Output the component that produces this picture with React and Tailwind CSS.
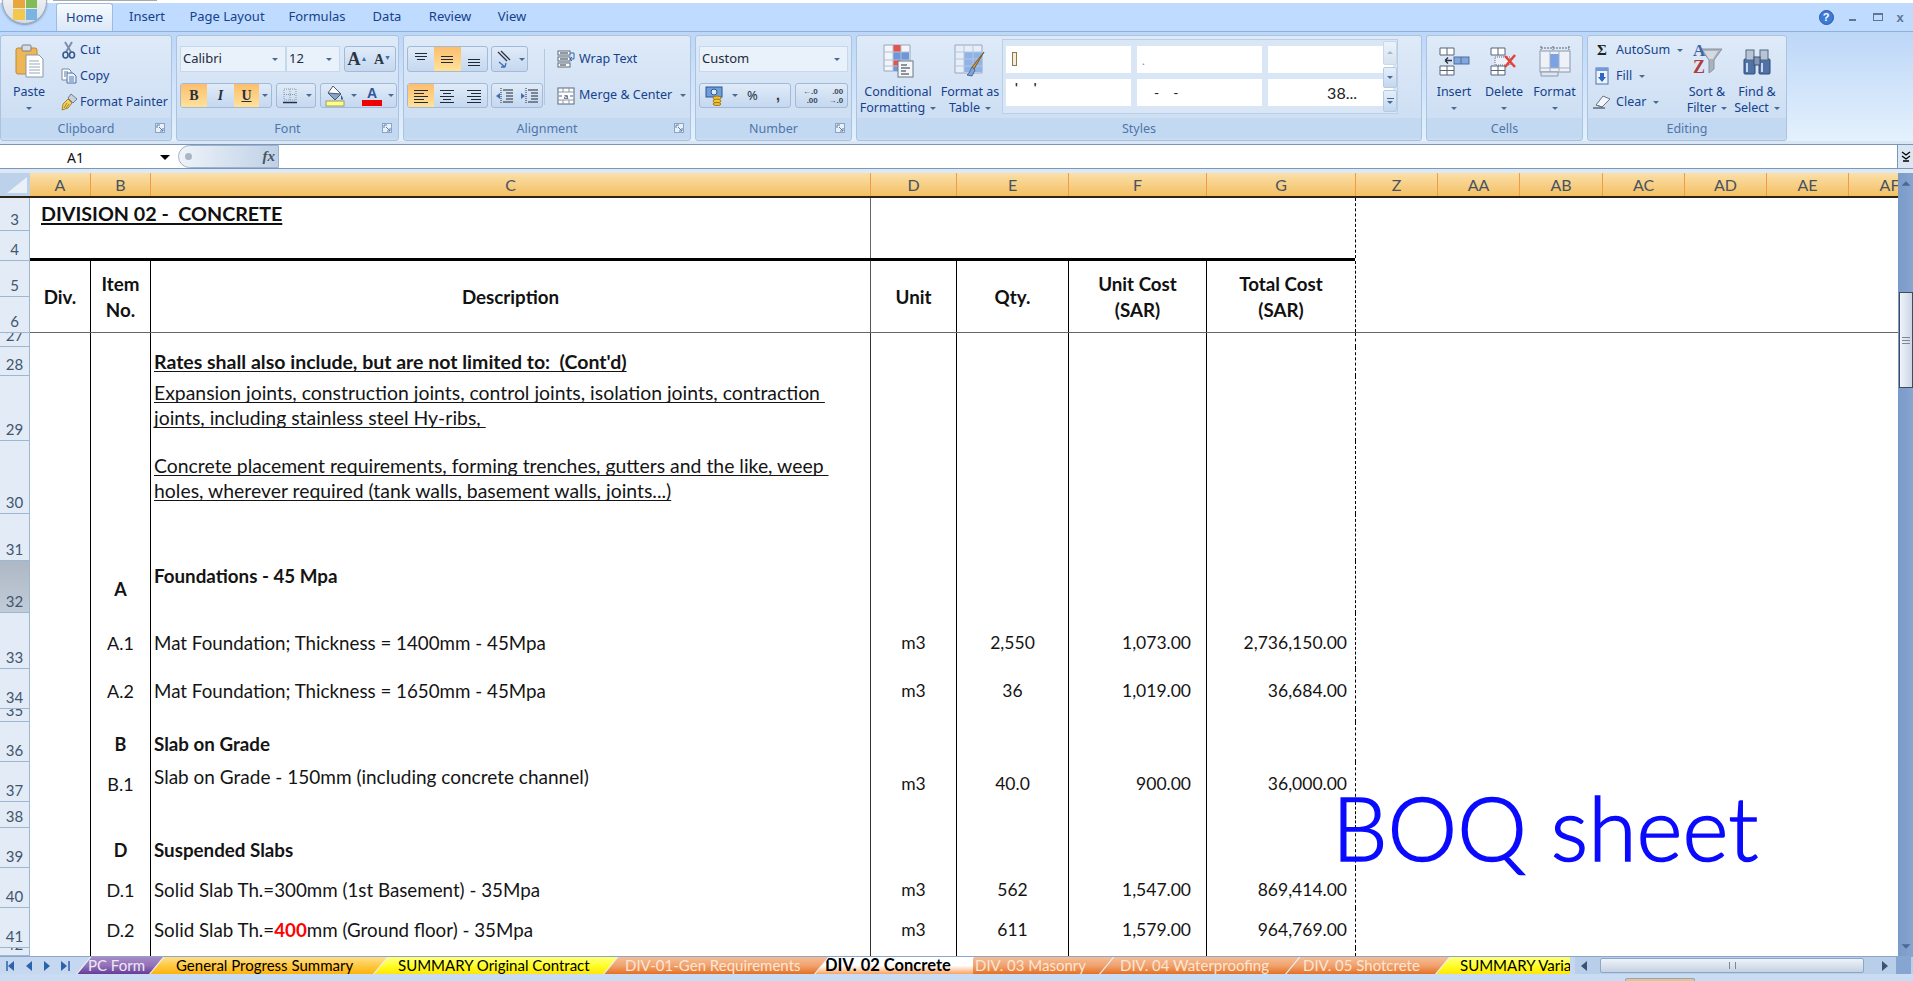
import React from "react";

const uiFont = "font-['Noto_Sans',sans-serif]";
const cellFont = "font-['Lato',sans-serif]";

const Caret = ({ className = "" }) => (
  <span
    className={`inline-block h-0 w-0 border-x-[3px] border-t-[3px] border-x-transparent border-t-[#4a6a96] ${className}`}
  />
);

const Svg = ({ w, h, children, className = "" }) => (
  <svg width={w} height={h} viewBox={`0 0 ${w} ${h}`} className={className}>
    {children}
  </svg>
);

/* ---------- ribbon icons ---------- */
const PasteIcon = () => (
  <Svg w={30} h={34}>
    <rect x="2" y="4" width="21" height="26" rx="2" fill="#eeb655" stroke="#b98a3a" />
    <rect x="8" y="1" width="9" height="6" rx="1" fill="#d9dde2" stroke="#77808c" />
    <path d="M12 11h13l4 4v18H12z" fill="#fff" stroke="#8b97a8" />
    <path d="M15 17h10M15 20h11M15 23h11M15 26h11M15 29h11" stroke="#9aa7ba" />
  </Svg>
);
const CutIcon = () => (
  <Svg w={14} h={18}>
    <path d="M3 1l6 10M10 1L4 11" stroke="#7d8ea8" strokeWidth="2" />
    <ellipse cx="3.5" cy="14" rx="2.5" ry="3" fill="none" stroke="#35588f" strokeWidth="1.6" />
    <ellipse cx="10" cy="14" rx="2.5" ry="3" fill="none" stroke="#35588f" strokeWidth="1.6" />
  </Svg>
);
const CopyIcon = () => (
  <Svg w={16} h={16}>
    <path d="M1 1h7l2 2v9H1z" fill="#fff" stroke="#7a8aa4" />
    <path d="M6 5h6l3 3v7H6z" fill="#eaf1fb" stroke="#4f6f9f" />
    <path d="M3 4h4M3 6h2M3 8h2M8 9h5M8 11h5M8 13h5" stroke="#4f78b5" />
  </Svg>
);
const PainterIcon = () => (
  <Svg w={18} h={18}>
    <path d="M11 1l6 5-4 4-5-5z" fill="#c9d1dc" stroke="#6f7d90" />
    <path d="M8 6l4 4-4 5-6 2 1-6z" fill="#f3cf63" stroke="#a9862c" />
    <path d="M4 15l3-5M6 15l3-4" stroke="#a9862c" />
  </Svg>
);
const BordersIcon = () => (
  <Svg w={16} h={16}>
    <path d="M2 1h12v11H2zM8 1v11M2 6.5h12" fill="none" stroke="#8d99aa" strokeDasharray="1 1" />
    <path d="M1 14.5h14" stroke="#27303f" strokeWidth="1.4" />
  </Svg>
);
const FillIcon = () => (
  <Svg w={22} h={22}>
    <path d="M9 1l8 8-6 6-7-7z" fill="#fff" stroke="#4d5a6c" />
    <path d="M4 8l13 1-6 6z" fill="#86a5cb" stroke="#4d5a6c" />
    <path d="M17 10c1.500 2 2 3 2 4s-2 1-2 0 0-2 0-4z" fill="#3a5f95" />
    <rect x="2" y="16" width="18" height="5" fill="#ffff80" stroke="#9a9a70" />
  </Svg>
);
const AlignIcon = ({ rows }) => (
  <Svg w={18} h={18}>
    {rows.map(([a, b, y]) => (
      <path key={y} d={`M${a} ${y + 0.5}H${b}`} stroke="#1f2937" />
    ))}
  </Svg>
);
const OrientIcon = () => (
  <Svg w={18} h={18}>
    <path d="M2 2l9 9M5 1l9 9" stroke="#2b3544" strokeWidth="1.3" fill="none" />
    <path d="M3 12l6 5M9 17l1-4M9 17l-4 0" stroke="#3c6fb4" strokeWidth="1.3" fill="none" />
  </Svg>
);
const IndentIcon = ({ dir }) => (
  <Svg w={18} h={18}>
    <path d="M7 3h10M10 6h7M10 9h7M10 12h7M7 15h10" stroke="#1f2937" />
    <path d="M5 1v16" stroke="#1f2937" strokeDasharray="1 1" />
    {dir === "left" ? (
      <path d="M0 9l4-3v6z" fill="#3c6fb4" />
    ) : (
      <path d="M4 9L0 6v6z" fill="#3c6fb4" />
    )}
  </Svg>
);
const WrapIcon = () => (
  <Svg w={18} h={18}>
    <rect x="1" y="1" width="12" height="4" fill="#fff" stroke="#5c6877" />
    <rect x="1" y="7" width="12" height="4" fill="#fff" stroke="#5c6877" />
    <rect x="1" y="13" width="12" height="4" fill="#fff" stroke="#5c6877" />
    <path d="M3 3h8M3 9h8M3 15h6" stroke="#27303f" />
    <path d="M13 3h4v6h-3M15 7l-2 2 2 2" stroke="#2f64b0" fill="none" />
  </Svg>
);
const MergeIcon = () => (
  <Svg w={18} h={18}>
    <rect x="1" y="1" width="16" height="16" fill="#fff" stroke="#5c6877" />
    <path d="M1 5h16M1 13h16M6 1v4M12 1v4M6 13v4M12 13v4" stroke="#8a96a6" />
    <text x="9" y="12" textAnchor="middle" fontSize="8" fill="#27303f" fontFamily="Liberation Sans">a</text>
    <path d="M2 9h3M16 9h-3" stroke="#2f64b0" />
  </Svg>
);
const MoneyIcon = () => (
  <Svg w={20} h={20}>
    <rect x="1" y="1" width="16" height="10" fill="#6f9fd8" stroke="#2b5797" />
    <circle cx="9" cy="6" r="3" fill="#dce9f8" stroke="#2b5797" />
    <ellipse cx="12" cy="12" rx="4" ry="2" fill="#f2c23c" stroke="#a27c14" />
    <ellipse cx="12" cy="15" rx="4" ry="2" fill="#f2c23c" stroke="#a27c14" />
    <ellipse cx="12" cy="18" rx="4" ry="1.500" fill="#f2c23c" stroke="#a27c14" />
  </Svg>
);
const DecIcon = ({ top, bottom }) => (
  <span className="relative flex h-[18px] w-[18px] flex-col items-end justify-center font-['Liberation_Sans',sans-serif] text-[8px] font-bold leading-[9px] text-[#39485c]">
    <span>{top}</span>
    <span>{bottom}</span>
  </span>
);
const CondIcon = () => (
  <Svg w={32} h={34}>
    <path d="M2 1h26v26H2z" fill="#f2f5fa" stroke="#9aa7ba" />
    <rect x="11" y="1" width="8" height="7" fill="#e5544b" />
    <rect x="11" y="8" width="16" height="8" fill="#6e96dc" />
    <rect x="11" y="16" width="8" height="6" fill="#e5544b" />
    <rect x="11" y="22" width="8" height="5" fill="#6e96dc" />
    <path d="M2 8h26M2 16h26M2 22h26M11 1v26M19 1v26" stroke="#b6c0cf" fill="none" />
    <rect x="16" y="17" width="15" height="16" fill="#f4f6f9" stroke="#6c7888" />
    <path d="M19 21h6M19 24h9M19 27h5M19 30h8" stroke="#27303f" />
  </Svg>
);
const TableIcon = () => (
  <Svg w={32} h={34}>
    <path d="M1 1h27v28H1z" fill="#e6eefa" stroke="#9aa7ba" />
    <rect x="10" y="8" width="18" height="20" fill="#8fb3e6" />
    <path d="M1 8h27M1 15h27M1 22h27M10 1v28M19 1v28" stroke="#b7c6dc" />
    <path d="M30 8L20 25l-2-2z" fill="#c99543" stroke="#7b5a24" />
    <path d="M18 23l3 3-3 6-5-1c3-2 3-5 5-8z" fill="#7da4d8" stroke="#4a6a96" />
  </Svg>
);
const InsertIcon = () => (
  <Svg w={32} h={30}>
    <path d="M2 2h14v7H2zM2 20h14v9H2zM9 2v7M9 20v9M2 24.500h14" fill="#fff" stroke="#56657a" />
    <rect x="16" y="11" width="15" height="7" fill="#82a6de" stroke="#4d6e9f" />
    <path d="M23 11v7" stroke="#4d6e9f" />
    <path d="M14 14.500H7M7 14.500l3-3M7 14.500l3 3" stroke="#27303f" fill="none" strokeWidth="1.300" />
  </Svg>
);
const DeleteIcon = () => (
  <Svg w={30} h={30}>
    <path d="M2 2h14v7H2zM2 20h14v9H2zM9 2v7M9 20v9M2 24.500h14" fill="#fff" stroke="#56657a" />
    <path d="M6 11h15v8H6z" fill="#eef2f8" stroke="#5e7290" strokeDasharray="1 1" />
    <path d="M16 10l10 11M26 9L16 21" stroke="#e34234" strokeWidth="2.500" />
  </Svg>
);
const FormatIcon = () => (
  <Svg w={32} h={32}>
    <path d="M2 3h28M2 1v4M30 1v4M14 1v4" stroke="#56657a" strokeDasharray="2 1" fill="none" />
    <rect x="1" y="6" width="30" height="21" fill="#eef2f8" stroke="#8a97aa" />
    <rect x="11" y="9" width="9" height="14" fill="#7ba3e4" />
    <path d="M11 6v21M20 6v21M1 23h30" stroke="#a3afc0" />
    <path d="M2 27h17v4H2z" fill="#dfe6f1" stroke="#8a97aa" />
  </Svg>
);
const FillSmallIcon = () => (
  <Svg w={14} h={18}>
    <rect x="1" y="1" width="12" height="16" fill="#eef3fb" stroke="#4a72b3" />
    <rect x="1" y="1" width="12" height="3" fill="#6e9ade" />
    <path d="M5 6h4v4h2l-4 5-4-5h2z" fill="#2d68c4" />
  </Svg>
);
const ClearIcon = () => (
  <Svg w={18} h={14}>
    <path d="M10 1l7 3-8 8-6-2z" fill="#f3f5f8" stroke="#697587" />
    <path d="M3 10l6 2" stroke="#697587" />
    <path d="M0 13h12" stroke="#27303f" />
  </Svg>
);
const SortIcon = () => (
  <span className="relative flex h-[32px] w-[32px]">
    <Svg w={32} h={32} className="absolute left-0 top-0">
      <path d="M10 4h21l-8 11v9l-5 4V15z" fill="#aab2bd" stroke="#8b93a0" />
      <path d="M13 6h14l-5 8h-4z" fill="#d5dae1" />
    </Svg>
    <span className="absolute left-[2px] top-[-3px] font-['Liberation_Serif',serif] text-[17px] font-bold leading-[18px] text-[#3f66a8]">A</span>
    <span className="absolute left-[2px] top-[13px] font-['Liberation_Serif',serif] text-[18px] font-bold leading-[18px] text-[#b13c3c]">Z</span>
  </span>
);
const FindIcon = () => (
  <Svg w={30} h={30}>
    <rect x="2" y="13" width="11" height="15" rx="1" fill="#4f73a8" stroke="#2f4a74" />
    <rect x="17" y="13" width="11" height="15" rx="1" fill="#4f73a8" stroke="#2f4a74" />
    <rect x="4" y="4" width="8" height="10" fill="#b7c4d6" stroke="#55677f" />
    <rect x="18" y="4" width="8" height="10" fill="#b7c4d6" stroke="#55677f" />
    <rect x="12" y="11" width="6" height="8" fill="#8598b3" stroke="#3d5272" />
    <path d="M5 17v9M20 17v9" stroke="#c8d7ec" strokeWidth="2" />
  </Svg>
);
const HelpIcon = () => (
  <span className="flex h-[15px] w-[15px] items-center justify-center rounded-full border border-[#2a5aa8] bg-[#3d7ad6] font-['Liberation_Sans',sans-serif] text-[11px] font-bold leading-none text-white">
    ?
  </span>
);
const OfficeButton = () => (
  <div className="absolute left-[2px] top-[-21px] z-20 flex h-[45px] w-[45px] items-center justify-center rounded-full border border-[#9aa6b5] bg-gradient-to-b from-[#ffffff] to-[#d6dde6] shadow-[0_1px_2px_rgba(60,80,110,0.5)]">
    <Svg w={26} h={26} className="mt-[12px]">
      <rect x="1" y="1" width="12" height="12" fill="#e9a63c" />
      <rect x="14" y="1" width="11" height="12" fill="#82bb58" />
      <rect x="1" y="14" width="12" height="11" fill="#f2c94e" />
      <rect x="14" y="14" width="11" height="11" fill="#79b4e2" />
    </Svg>
  </div>
);

/* ---------- ribbon pieces ---------- */
const Launcher = () => (
  <Svg w={10} h={10} className="absolute right-[6px] top-[5px]">
    <rect x="0.5" y="0.5" width="9" height="9" fill="#e8f0fa" stroke="#8aa3c6" />
    <path d="M2 2h3M2 2v3M8 8L4 4M8 8V5M8 8H5" stroke="#5f7ea8" fill="none" />
  </Svg>
);

const Group = ({ w, label, launcher, children }) => (
  <div className={`${w} flex shrink-0 flex-col overflow-hidden rounded-[3px] border border-[#abc3df] bg-gradient-to-b from-[#deeaf8] to-[#cadcf2]`}>
    <div className="flex h-[82px]">{children}</div>
    <div className="relative flex h-[20px] items-center justify-center bg-[#c3d9f2] pt-[2px] text-[12.5px] leading-none text-[#4f75aa]">
      {label}
      {launcher && <Launcher />}
    </div>
  </div>
);

const BtnGroup = ({ w, children, className = "" }) => (
  <div className={`${w} flex h-full shrink-0 overflow-hidden rounded-[3px] border border-[#a2bad8] bg-gradient-to-b from-[#e0ebf8] to-[#c5d8ef] ${className}`}>
    {children}
  </div>
);

const Btn = ({ w, active, children }) => (
  <div
    className={`${w} flex h-full items-center justify-center ${
      active ? "bg-gradient-to-b from-[#fbbe6c] to-[#fee29a]" : ""
    }`}
  >
    {children}
  </div>
);

const Combo = ({ w, value, className = "" }) => (
  <div className={`${w} flex h-full shrink-0 items-center justify-between border border-[#c6d8ec] bg-[#e9f1fb] pl-[2px] pr-[7px] text-[13px] text-[#1e2b3c] ${className}`}>
    <span>{value}</span>
    <Caret />
  </div>
);

const SmallRow = ({ iconW, icon, label, caret }) => (
  <div className="flex h-[26px] items-center text-[12.5px] text-[#15428b]">
    <span className={`${iconW} flex shrink-0 items-center justify-center`}>{icon}</span>
    <span>{label}</span>
    {caret && <Caret className="ml-[7px]" />}
  </div>
);

const BigBtn = ({ w, icon, line1, line2 }) => (
  <div className={`${w} flex shrink-0 flex-col items-center text-[12.5px] leading-[16px] text-[#15428b]`}>
    <div className="flex h-[48px] items-center justify-center pt-[2px]">{icon}</div>
    <span>{line1}</span>
    <span className="flex h-[16px] items-center gap-[5px] whitespace-nowrap">
      {line2}
      <Caret />
    </span>
  </div>
);

const Ribbon = () => (
  <div className={`flex h-[109px] gap-[4px] bg-gradient-to-b from-[#bdd7f8] to-[#e4f1fd] pt-[3px] ${uiFont}`}>
    <Group w="w-[172px]" label="Clipboard" launcher>
      <BigBtn w="w-[56px]" icon={<PasteIcon />} line1="Paste" line2="" />
      <div className="flex flex-col pt-[1px]">
        <SmallRow iconW="w-[23px]" icon={<CutIcon />} label="Cut" />
        <SmallRow iconW="w-[23px]" icon={<CopyIcon />} label="Copy" />
        <SmallRow iconW="w-[23px]" icon={<PainterIcon />} label="Format Painter" />
      </div>
    </Group>

    <Group w="w-[223px]" label="Font" launcher>
      <div className="flex flex-col gap-[11px] px-[3px] pt-[10px]">
        <div className="flex h-[26px]">
          <Combo w="w-[106px]" value="Calibri" />
          <Combo w="w-[54px]" value="12" />
          <BtnGroup w="w-[52px]" className="ml-[4px]">
            <Btn w="w-1/2">
              <span className="font-['Liberation_Serif',serif] text-[18px] font-bold text-[#2b3544]">
                A<sup className="text-[7px] text-[#3c6fb4]">▲</sup>
              </span>
            </Btn>
            <Btn w="w-1/2">
              <span className="font-['Liberation_Serif',serif] text-[14px] font-bold text-[#2b3544]">
                A<sup className="text-[7px] text-[#3c6fb4]">▼</sup>
              </span>
            </Btn>
          </BtnGroup>
        </div>
        <div className="flex h-[25px] gap-[4px]">
          <BtnGroup w="w-[92px]">
            <Btn w="w-[26px]" active>
              <span className="font-['Liberation_Serif',serif] text-[14px] font-bold text-[#27303f]">B</span>
            </Btn>
            <Btn w="w-[27px]">
              <span className="font-['Liberation_Serif',serif] text-[14px] font-bold italic text-[#27303f]">I</span>
            </Btn>
            <Btn w="w-[25px]" active>
              <span className="font-['Liberation_Serif',serif] text-[14px] font-bold text-[#27303f] underline">U</span>
            </Btn>
            <Btn w="w-[12px]"><Caret /></Btn>
          </BtnGroup>
          <BtnGroup w="w-[40px]">
            <Btn w="w-[26px]"><BordersIcon /></Btn>
            <Btn w="w-[12px]"><Caret /></Btn>
          </BtnGroup>
          <BtnGroup w="w-[77px]">
            <Btn w="w-[28px]"><FillIcon /></Btn>
            <Btn w="w-[9px]"><Caret /></Btn>
            <Btn w="w-[28px]">
              <span className="flex flex-col items-center font-['Liberation_Sans',sans-serif] text-[14px] font-bold leading-[14px] text-[#2f5597]">
                A<span className="h-[6px] w-[20px] bg-[#f00000]" />
              </span>
            </Btn>
            <Btn w="w-[10px]"><Caret /></Btn>
          </BtnGroup>
        </div>
      </div>
    </Group>

    <Group w="w-[288px]" label="Alignment" launcher>
      <div className="flex w-[137px] shrink-0 flex-col gap-[11px] pl-[3px] pt-[10px]">
        <div className="flex h-[26px] gap-[3px]">
          <BtnGroup w="w-[81px]">
            <Btn w="w-1/3"><AlignIcon rows={[[3, 15, 3], [3, 15, 6], [5, 13, 9]]} /></Btn>
            <Btn w="w-1/3" active><AlignIcon rows={[[3, 15, 6], [3, 15, 9], [3, 15, 12]]} /></Btn>
            <Btn w="w-1/3"><AlignIcon rows={[[3, 15, 9], [3, 15, 12], [3, 15, 15]]} /></Btn>
          </BtnGroup>
          <BtnGroup w="w-[37px]">
            <Btn w="w-[25px]"><OrientIcon /></Btn>
            <Btn w="w-[10px]"><Caret /></Btn>
          </BtnGroup>
        </div>
        <div className="flex h-[25px] gap-[3px]">
          <BtnGroup w="w-[81px]">
            <Btn w="w-1/3" active><AlignIcon rows={[[2, 16, 3], [2, 12, 6], [2, 16, 9], [2, 12, 12], [2, 16, 15]]} /></Btn>
            <Btn w="w-1/3"><AlignIcon rows={[[2, 16, 3], [5, 13, 6], [2, 16, 9], [5, 13, 12], [2, 16, 15]]} /></Btn>
            <Btn w="w-1/3"><AlignIcon rows={[[2, 16, 3], [6, 16, 6], [2, 16, 9], [6, 16, 12], [2, 16, 15]]} /></Btn>
          </BtnGroup>
          <BtnGroup w="w-[52px]">
            <Btn w="w-1/2"><IndentIcon dir="left" /></Btn>
            <Btn w="w-1/2"><IndentIcon dir="right" /></Btn>
          </BtnGroup>
        </div>
      </div>
      <div className="ml-[3px] mt-[13px] h-[56px] w-px bg-[#b3c8e2]" />
      <div className="ml-[12px] flex flex-col gap-[11px] pt-[10px] text-[12.5px] text-[#15428b]">
        <div className="flex h-[26px] items-center gap-[4px]"><WrapIcon /> Wrap Text</div>
        <div className="flex h-[25px] items-center gap-[4px] whitespace-nowrap"><MergeIcon /> Merge &amp; Center <Caret className="ml-[4px]" /></div>
      </div>
    </Group>

    <Group w="w-[157px]" label="Number" launcher>
      <div className="flex flex-col gap-[11px] px-[3px] pt-[10px]">
        <div className="flex h-[26px]"><Combo w="w-[149px]" value="Custom" /></div>
        <div className="flex h-[25px] gap-[4px]">
          <BtnGroup w="w-[92px]">
            <Btn w="w-[30px]"><MoneyIcon /></Btn>
            <Btn w="w-[9px]"><Caret /></Btn>
            <Btn w="w-[27px]"><span className="text-[13px] text-[#27303f]">%</span></Btn>
            <Btn w="w-[24px]"><span className="font-['Liberation_Sans',sans-serif] text-[14px] font-bold text-[#27303f]">,</span></Btn>
          </BtnGroup>
          <BtnGroup w="w-[53px]">
            <Btn w="w-1/2"><DecIcon top="←.0" bottom=".00" /></Btn>
            <Btn w="w-1/2"><DecIcon top=".00" bottom="→.0" /></Btn>
          </BtnGroup>
        </div>
      </div>
    </Group>

    <Group w="w-[566px]" label="Styles">
      <BigBtn w="w-[82px]" icon={<CondIcon />} line1="Conditional" line2="Formatting" />
      <BigBtn w="w-[62px]" icon={<TableIcon />} line1="Format as" line2="Table" />
      <div className="ml-[1px] mt-[3px] flex h-[75px] w-[396px] shrink-0 border border-[#b9cee7] bg-[#d8e6f6]">
        <div className="grid w-[380px] shrink-0 grid-cols-[125px_125px_125px] grid-rows-[27px_27px] gap-x-[6px] gap-y-[6px] pl-[3px] pt-[6px] font-['Lato',sans-serif] text-[#222]">
          <div className="bg-white pl-[6px] pt-[6px]"><span className="block h-[14px] w-[5px] border border-[#8c7a4c] bg-[#f4eed8]" /></div>
          <div className="bg-white pl-[5px] pt-[6px] text-[12px] text-[#889]">.</div>
          <div className="bg-white" />
          <div className="bg-white pl-[9px] text-[13px] font-bold tracking-[16px]">''</div>
          <div className="bg-white pl-[17px] pt-[3px] text-[14px] tracking-[14px]">--</div>
          <div className="bg-white pr-[36px] pt-[2px] text-right text-[16px]">38...</div>
        </div>
        <div className="flex w-[15px] flex-col gap-[2px] py-[1px]">
          <div className="flex h-[24px] items-center justify-center rounded-[2px] border border-[#c9d8ea] bg-gradient-to-b from-[#ecf2f9] to-[#d7e3f1]"><Caret className="rotate-180 opacity-40" /></div>
          <div className="flex h-[22px] items-center justify-center rounded-[2px] border border-[#b5cae3] bg-gradient-to-b from-[#e6effa] to-[#c3d7ef]"><Caret /></div>
          <div className="flex h-[22px] flex-col items-center justify-center gap-[2px] rounded-[2px] border border-[#b5cae3] bg-gradient-to-b from-[#e6effa] to-[#c3d7ef]"><span className="h-px w-[7px] bg-[#4a6a96]" /><Caret /></div>
        </div>
      </div>
    </Group>

    <Group w="w-[157px]" label="Cells">
      <BigBtn w="w-[54px]" icon={<InsertIcon />} line1="Insert" line2="" />
      <BigBtn w="w-[46px]" icon={<DeleteIcon />} line1="Delete" line2="" />
      <BigBtn w="w-[55px]" icon={<FormatIcon />} line1="Format" line2="" />
    </Group>

    <Group w="w-[200px]" label="Editing">
      <div className="flex w-[91px] shrink-0 flex-col pt-[1px]">
        <SmallRow iconW="w-[28px]" icon={<span className="font-['Liberation_Serif',serif] text-[15px] font-bold text-[#222]">Σ</span>} label="AutoSum" caret />
        <SmallRow iconW="w-[28px]" icon={<FillSmallIcon />} label="Fill" caret />
        <SmallRow iconW="w-[28px]" icon={<ClearIcon />} label="Clear" caret />
      </div>
      <BigBtn w="w-[56px]" icon={<SortIcon />} line1="Sort &" line2="Filter" />
      <BigBtn w="w-[44px]" icon={<FindIcon />} line1="Find &" line2="Select" />
    </Group>
  </div>
);

/* ---------- sheet ---------- */
const columns = [
  { id: "A", w: "w-[61px]" },
  { id: "B", w: "w-[60px]" },
  { id: "C", w: "w-[720px]" },
  { id: "D", w: "w-[86px]" },
  { id: "E", w: "w-[112px]" },
  { id: "F", w: "w-[138px]" },
  { id: "G", w: "w-[149px]" },
  { id: "Z", w: "w-[82px]" },
  { id: "AA", w: "w-[82px]" },
  { id: "AB", w: "w-[83px]" },
  { id: "AC", w: "w-[82px]" },
  { id: "AD", w: "w-[82px]" },
  { id: "AE", w: "w-[82px]" },
  { id: "AF", w: "w-[82px]" },
];

const rowNumbers = [
  { n: 3, h: "h-[33px]" },
  { n: 4, h: "h-[30px]" },
  { n: 5, h: "h-[36px]" },
  { n: 6, h: "h-[36px]" },
  { n: 27, h: "h-[14px]" },
  { n: 28, h: "h-[29px]" },
  { n: 29, h: "h-[65px]" },
  { n: 30, h: "h-[73px]" },
  { n: 31, h: "h-[47px]" },
  { n: 32, h: "h-[52px]", selected: true },
  { n: 33, h: "h-[56px]" },
  { n: 34, h: "h-[40px]" },
  { n: 35, h: "h-[13px]" },
  { n: 36, h: "h-[40px]" },
  { n: 37, h: "h-[40px]" },
  { n: 38, h: "h-[26px]" },
  { n: 39, h: "h-[40px]" },
  { n: 40, h: "h-[40px]" },
  { n: 41, h: "h-[40px]" },
  { n: 42, h: "h-[8px]" },
];

const Row = ({ h, item, itemBold, desc, unit, qty, rate, total }) => (
  <div className={`flex ${h} text-[17.5px] text-[#141414]`}>
    <div className="w-[61px] border-r border-black" />
    <div className={`flex w-[60px] items-center justify-center border-r border-black pt-[4px] text-[18px] ${itemBold ? "font-bold" : ""}`}>{item}</div>
    <div className="flex w-[720px] items-center border-r border-[#333] pl-[3px] pt-[4px] text-[18.75px]">{desc}</div>
    <div className="flex w-[86px] items-center justify-center border-r border-black pt-[4px]">{unit}</div>
    <div className="flex w-[112px] items-center justify-center border-r border-black pt-[4px]">{qty}</div>
    <div className="flex w-[138px] items-center justify-end border-r border-black pr-[15px] pt-[4px]">{rate}</div>
    <div className="flex w-[149px] items-center justify-end border-r border-dashed border-black pr-[8px] pt-[4px]">{total}</div>
  </div>
);

const underlined = "underline underline-offset-2 [text-decoration-skip-ink:none]";

const Sheet = () => (
  <div className={`flex h-[758px] ${cellFont}`}>
    <div className="flex w-[30px] shrink-0 flex-col">
      {rowNumbers.map((r) => (
        <div
          key={r.n}
          className={`${r.h} flex shrink-0 items-end justify-center overflow-hidden border-b border-r border-[#9db6d2] text-[15px] leading-[21px] text-[#41566f] ${
            r.selected ? "bg-gradient-to-b from-[#aeb8c5] to-[#c2ccd9]" : "bg-[#e3ebf6]"
          }`}
        >
          {r.n}
        </div>
      ))}
    </div>

    <div className="relative flex-1 bg-white">
      {/* rows 3-4 */}
      <div className="flex h-[60px] text-[#111]">
        <div className="w-[841px] border-r border-[#666] pl-[11px] pt-[1px]">
          <span className={`whitespace-pre text-[19.7px] font-bold decoration-2 ${underlined}`}>DIVISION 02 -  CONCRETE</span>
        </div>
        <div className="w-[485px] border-r border-dashed border-black" />
      </div>
      <div className="h-[3px] w-[1325px] bg-black" />

      {/* rows 5-6 */}
      <div className="flex h-[72px] border-b border-[#666] text-center text-[18.75px] font-bold leading-[26px] text-[#111]">
        <div className="flex w-[61px] items-center justify-center border-r border-black">Div.</div>
        <div className="flex w-[60px] items-center justify-center border-r border-black">Item<br />No.</div>
        <div className="flex w-[720px] items-center justify-center border-r border-[#555]">Description</div>
        <div className="flex w-[86px] items-center justify-center border-r border-black">Unit</div>
        <div className="flex w-[112px] items-center justify-center border-r border-black">Qty.</div>
        <div className="flex w-[138px] items-center justify-center border-r border-black">Unit Cost<br />(SAR)</div>
        <div className="flex w-[149px] items-center justify-center border-r border-dashed border-black">Total Cost<br />(SAR)</div>
      </div>

      <Row h="h-[14px]" />
      <Row h="h-[29px]" desc={<span className={`-mt-[4px] whitespace-pre text-[19.5px] font-bold ${underlined}`}>Rates shall also include, but are not limited to:  (Cont'd)</span>} />
      <Row
        h="h-[65px]"
        desc={
          <span className={`-mt-[12px] whitespace-pre text-[19.4px] leading-[25px] ${underlined}`}>
            {"Expansion joints, construction joints, control joints, isolation joints, contraction \njoints, including stainless steel Hy-ribs, "}
          </span>
        }
      />
      <Row
        h="h-[73px]"
        desc={
          <span className={`-mt-[4px] whitespace-pre text-[19.4px] leading-[25px] ${underlined}`}>
            {"Concrete placement requirements, forming trenches, gutters and the like, weep \nholes, wherever required (tank walls, basement walls, joints...)"}
          </span>
        }
      />
      <Row h="h-[47px]" />
      <Row h="h-[52px]" item="A" itemBold desc={<span className="-mt-[25px] font-bold">Foundations - 45 Mpa</span>} />
      <Row h="h-[56px]" item="A.1" desc="Mat Foundation; Thickness = 1400mm - 45Mpa" unit="m3" qty="2,550" rate="1,073.00" total="2,736,150.00" />
      <Row h="h-[40px]" item="A.2" desc="Mat Foundation; Thickness = 1650mm - 45Mpa" unit="m3" qty="36" rate="1,019.00" total="36,684.00" />
      <Row h="h-[13px]" />
      <Row h="h-[40px]" item="B" itemBold desc={<span className="font-bold">Slab on Grade</span>} />
      <Row h="h-[40px]" item="B.1" desc={<span className="-mt-[13px] text-[19px]">Slab on Grade - 150mm (including concrete channel)</span>} unit="m3" qty="40.0" rate="900.00" total="36,000.00" />
      <Row h="h-[26px]" />
      <Row h="h-[40px]" item="D" itemBold desc={<span className="font-bold">Suspended Slabs</span>} />
      <Row h="h-[40px]" item="D.1" desc="Solid Slab Th.=300mm (1st Basement) - 35Mpa" unit="m3" qty="562" rate="1,547.00" total="869,414.00" />
      <Row
        h="h-[40px]"
        item="D.2"
        desc={<span>Solid Slab Th.=<b className="text-[#ff0000]">400</b>mm (Ground floor) - 35Mpa</span>}
        unit="m3"
        qty="611"
        rate="1,579.00"
        total="964,769.00"
      />
      <Row h="h-[8px]" />

      <span className="absolute left-[1302px] top-[585px] whitespace-nowrap text-[88px] font-light leading-none text-[#0a0aff] [-webkit-text-stroke:1.5px_#0a0aff]">
        BOQ sheet
      </span>
    </div>
  </div>
);

const ScrollBar = () => (
  <div className="flex w-[15px] shrink-0 flex-col items-center bg-gradient-to-r from-[#7a9ac8] to-[#86a5d0]">
    <Caret className="mt-[9px] rotate-180 scale-150 border-t-[#3d5272]" />
    <div className="ml-[1px] mt-[107px] flex h-[96px] w-[14px] items-center justify-center border border-[#3f4c5e] bg-gradient-to-r from-[#f0f3f8] to-[#cbd6e4]">
      <span className="h-[7px] w-[8px] border-y border-[#7b8797] bg-[linear-gradient(#7b8797,#7b8797)] bg-[length:100%_1px] bg-center bg-no-repeat" />
    </div>
    <Caret className="mt-auto mb-[8px] scale-150 border-t-[#3d5272]" />
  </div>
);

/* ---------- sheet tabs ---------- */
const orange = "from-[#f6bd95] via-[#f0a26e] to-[#e4701a]";
const yellow = "from-[#ffff7a] via-[#ffff24] to-[#ffe600]";

const tabs = [
  { label: "PC Form", w: "w-[87px]", fill: "from-[#a78ac6] via-[#9272b8] to-[#663c96]", text: "text-[#efe8f6]", pl: "pl-[12px]" },
  { label: "General Progress Summary", w: "w-[238px]", fill: "from-[#ffdf8a] via-[#ffc93f] to-[#ffb300]", text: "text-black", pl: "pl-[27px]" },
  { label: "SUMMARY Original Contract", w: "w-[244px]", fill: yellow, text: "text-black", pl: "pl-[25px]" },
  { label: "DIV-01-Gen Requirements", w: "w-[225px]", fill: orange, text: "text-[#fce6d4]", pl: "pl-[22px]" },
  { label: "DIV. 02 Concrete", w: "w-[159px]", fill: "from-[#ffffff] via-[#ffffff] to-[#f7a25c]", text: "text-[16.5px] font-bold text-black", pl: "pl-[11px]" },
  { label: "DIV. 03 Masonry", w: "w-[154px]", fill: orange, text: "text-[#fce6d4]", pl: "pl-[16px]" },
  { label: "DIV. 04 Waterproofing", w: "w-[200px]", fill: orange, text: "text-[#fce6d4]", pl: "pl-[21px]" },
  { label: "DIV. 05 Shotcrete", w: "w-[164px]", fill: orange, text: "text-[#fce6d4]", pl: "pl-[18px]" },
  { label: "SUMMARY Variations", w: "w-[180px]", fill: yellow, text: "text-black", pl: "pl-[25px]" },
];

const NavArrows = () => (
  <div className="flex w-[76px] shrink-0 items-center pl-[4px] text-[#2d62ad]">
    <Svg w={72} h={12}>
      <path d="M3 1v10" stroke="#2d62ad" strokeWidth="1.500" />
      <path d="M10 1v10L4 6z" fill="#2d62ad" />
      <path d="M28 1v10l-6-5z" fill="#2d62ad" />
      <path d="M40 1v10l6-5z" fill="#2d62ad" />
      <path d="M57 1v10l6-5z" fill="#2d62ad" />
      <path d="M65 1v10" stroke="#2d62ad" strokeWidth="1.500" />
    </Svg>
  </div>
);

const SheetTabs = () => (
  <div className="flex h-[18px] border-t border-[#8aa6cb] bg-[#c5d8ef]">
    <NavArrows />
    <div className="flex w-[1494px] shrink-0 overflow-hidden font-['Lato',sans-serif] text-[15px] leading-[17px]">
      {tabs.map((t, i) => (
        <div
          key={t.label}
          className={`${t.w} relative h-full shrink-0 bg-[#eaf0f8] [clip-path:polygon(14px_0,100%_0,100%_100%,0_100%)] ${i > 0 ? "-ml-[14px]" : ""}`}
          style={{ zIndex: i === 4 ? 20 : 10 + i }}
        >
          <div className={`flex h-full w-full whitespace-nowrap bg-gradient-to-b [clip-path:polygon(15.5px_0,100%_0,100%_100%,1.5px_100%)] ${t.pl} ${t.fill} ${t.text}`}>
            {t.label}
          </div>
        </div>
      ))}
    </div>
    <div className="ml-[5px] flex flex-1 items-center bg-[#b9cfe9] px-[2px]">
      <Svg w={14} h={12}><path d="M10 1v10L4 6z" fill="#3d5272" /></Svg>
      <div className="ml-[9px] flex h-[15px] w-[264px] items-center justify-center rounded-[2px] border border-[#8ea6c6] bg-gradient-to-b from-[#eef2f8] to-[#c5d2e3]">
        <span className="h-[7px] w-[7px] border-x border-[#7b8797]" />
      </div>
      <Svg w={14} h={12} className="ml-[14px]"><path d="M4 1v10l6-5z" fill="#3d5272" /></Svg>
      <div className="ml-auto h-full w-[15px] bg-[#86a5d0]" />
    </div>
  </div>
);

const ribbonTabs = [
  { label: "Insert", w: "w-[68px]" },
  { label: "Page Layout", w: "w-[92px]" },
  { label: "Formulas", w: "w-[88px]" },
  { label: "Data", w: "w-[52px]" },
  { label: "Review", w: "w-[74px]" },
  { label: "View", w: "w-[50px]" },
];

export default function App() {
  return (
    <div className="relative h-[981px] w-[1913px] overflow-hidden bg-white">
      <div className="relative h-[3px] bg-white">
        <div className="ml-[53px] h-px w-[104px] bg-[#a8a8a8]" />
      </div>
      <OfficeButton />

      {/* tab row */}
      <div className={`flex h-[29px] border-b border-[#8fb0d8] bg-[#bfdbff] pl-[56px] text-[13px] text-[#15428b] ${uiFont}`}>
        <div className="z-10 flex h-[28px] w-[57px] items-center justify-center self-end rounded-t-[3px] border border-b-0 border-[#9dbbe0] bg-gradient-to-b from-[#f6fafe] to-[#dbe8f8]">Home</div>
        {ribbonTabs.map((t) => (
          <div key={t.label} className={`${t.w} flex items-center justify-center`}>{t.label}</div>
        ))}
        <div className="ml-auto flex items-center text-[#5f7590]">
          <span className="flex w-[26px] justify-center"><HelpIcon /></span>
          <span className="flex w-[26px] justify-center"><span className="mt-[6px] h-[2px] w-[7px] bg-[#5f7590]" /></span>
          <span className="flex w-[25px] justify-center"><span className="h-[8px] w-[10px] border border-t-2 border-[#5f7590]" /></span>
          <span className="flex w-[20px] justify-center font-['Liberation_Sans',sans-serif] text-[13px] font-bold leading-none">x</span>
          <span className="w-[3px]" />
        </div>
      </div>

      <Ribbon />

      {/* formula bar */}
      <div className="h-[3px] bg-[#d8e6f6]" />
      <div className={`flex h-[25px] border-y border-[#7a97b8] bg-white ${uiFont}`}>
        <div className="relative flex w-[178px] items-center justify-between pl-[67px] pr-[8px] pt-[1px] text-[14px] text-[#111]">
          A1
          <span className="h-0 w-0 border-x-[5px] border-t-[5px] border-x-transparent border-t-black" />
        </div>
        <div className="flex w-[101px] items-center justify-between rounded-l-full border border-[#9fb3cc] bg-gradient-to-r from-[#eef3f9] to-[#bfd1e7] pl-[6px] pr-[3px]">
          <span className="h-[7px] w-[7px] rounded-full bg-[#aab6c4]" />
          <span className="font-['Liberation_Serif',serif] text-[15px] font-bold italic text-[#4b5563]">fx</span>
        </div>
        <div className="flex-1" />
        <div className="flex w-[16px] items-center justify-center border-l border-[#7a97b8] bg-[#dbe6f3] text-[10px] font-bold leading-none text-black">
          <Svg w={10} h={11}>
            <path d="M1 1l4 3 4-3M1 5l4 3 4-3M2 10h6" stroke="#000" strokeWidth="1.300" fill="none" />
          </Svg>
        </div>
      </div>
      <div className="h-[4px] bg-[#dce8f6]" />

      {/* grid + vertical scroll bar */}
      <div className="flex h-[783px]">
        <div className="flex w-[1898px] flex-col overflow-hidden">
          <div className={`flex h-[25px] border-b-2 border-[#2b2417] ${cellFont}`}>
            <div className="relative h-full w-[30px] shrink-0 bg-[#bcd1ea]">
              <Svg w={22} h={18} className="absolute bottom-[2px] right-[2px]">
                <path d="M21 1v16H1z" fill="#e9f0f8" />
              </Svg>
            </div>
            {columns.map((c) => (
              <div
                key={c.id}
                className={`${c.w} flex shrink-0 items-center justify-center whitespace-nowrap border-r border-[#f09c45] bg-gradient-to-b from-[#fae0a8] to-[#f4bf62] pt-[1px] text-[16px] text-[#47535f]`}
              >
                {c.id}
              </div>
            ))}
          </div>
          <Sheet />
        </div>
        <ScrollBar />
      </div>

      <SheetTabs />
      {/* status bar */}
      <div className="flex h-[7px] items-end justify-end bg-[#c9dcf3] pr-[218px]">
        <div className="h-[3px] w-[70px] rounded-t-[2px] border border-b-0 border-[#8ea6c6] bg-[#e6c58a]" />
      </div>
    </div>
  );
}
